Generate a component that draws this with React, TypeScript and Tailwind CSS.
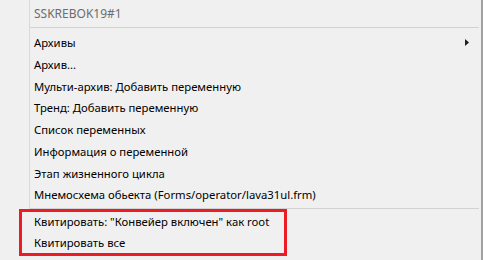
import React from "react";

const items = [
  "Архивы",
  "Архив...",
  "Мульти-архив: Добавить переменную",
  "Тренд: Добавить переменную",
  "Список переменных",
  "Информация о переменной",
  "Этап жизненного цикла",
  "Мнемосхема обьекта (Forms/operator/lava31ul.frm)",
];

export default function App() {
  return (
    <div
      className="w-[483px] h-[260px] bg-[#f0f0f0] overflow-hidden flex text-[11.3px] text-black"
      style={{ fontFamily: '"Noto Sans", "Open Sans", sans-serif' }}
    >
      <div className="w-[481px] flex flex-col">
        <div className="flex">
          <div className="w-[30px] shrink-0 border-r border-[#d9d9d9]" />
          <div className="flex-1 flex flex-col">
            <div className="h-[27px] flex items-center pl-[4px] text-[12px] text-[#6d6d6d]">SSKREBOK19#1</div>
            <div className="h-px bg-[#d2d2d2] mr-[2px]" />
            <div className="h-[4px]" />
            {items.map((t, i) => (
              <div key={i} className="h-[21.75px] flex items-center pl-[4px] pr-[12px] justify-between">
                <span className="leading-none">{t}</span>
                {i === 0 && (
                  <svg width="4" height="7" viewBox="0 0 4 7">
                    <path d="M0 0 L4 3.5 L0 7 Z" fill="#1f1f1f" />
                  </svg>
                )}
              </div>
            ))}
            <div className="h-[2px]" />
            <div className="h-px bg-[#d2d2d2] mr-[2px]" />
          </div>
        </div>
        <div className="ml-[19px] w-[268px] h-[47px] border-[3px] border-[#ed1c24] flex flex-col pl-[12px]">
          <div className="h-[20px] mt-[1px] flex items-center">Квитировать: "Конвейер включен" как root</div>
          <div className="h-[20px] mt-[1px] flex items-center">Квитировать все</div>
        </div>
      </div>
      <div className="w-[2px] bg-[#a0a0a0]" />
    </div>
  );
}
